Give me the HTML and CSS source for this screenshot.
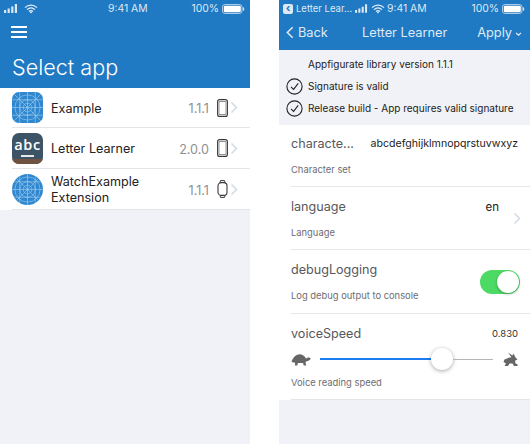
FILE: index.html
```html
<!DOCTYPE html>
<html lang="en">
<head>
    <meta charset="UTF-8">
    <meta name="viewport" content="width=device-width, initial-scale=1.0">
    <title>Appfigurate</title>
    <link rel="stylesheet" href="styles.css">
</head>
<body>
    <svg class="defs" width="0" height="0">
        <symbol id="blueprint" viewBox="0 0 32 32">
            <g fill="none" stroke="#a9d0ee" stroke-width="0.6">
                <path d="M0 8H32M0 16H32M0 24H32M8 0V32M16 0V32M24 0V32M0 0L32 32M32 0L0 32"/>
                <circle cx="16" cy="16" r="4.5"/>
                <circle cx="16" cy="16" r="8"/>
                <circle cx="16" cy="16" r="13"/>
            </g>
        </symbol>
        <symbol id="phone" viewBox="0 0 11 18">
            <rect x="0.6" y="0.6" width="9.8" height="16.8" rx="2" fill="none" stroke="#3a3a3c" stroke-width="1.1"/>
            <rect x="2" y="2.6" width="7" height="12.8" fill="none" stroke="#77777a" stroke-width="0.8"/>
        </symbol>
        <symbol id="chevron" viewBox="0 0 8 13">
            <path d="M1.5 1.5L6.5 6.5L1.5 11.5" fill="none" stroke="#d3dbe8" stroke-width="1.5"/>
        </symbol>
        <symbol id="check" viewBox="0 0 17 17">
            <circle cx="8.5" cy="8.5" r="7.6" fill="none" stroke="#222" stroke-width="1.1"/>
            <path d="M5 8.8L7.6 11.4L12.2 5.4" fill="none" stroke="#222" stroke-width="1.1"/>
        </symbol>
        <symbol id="status-signal" viewBox="0 0 14 9">
            <path d="M0 6h2.2v3H0zM3.6 4.5h2.2V9H3.6zM7.2 2.5h2.2V9H7.2zM10.8 0H13v9h-2.2z" fill="#dce9f5"/>
        </symbol>
        <symbol id="status-wifi" viewBox="0 0 14 10">
            <path d="M1 3.6C4.5 0.4 9.5 0.4 13 3.6M3 5.6C5.4 3.5 8.6 3.5 11 5.6M5 7.5C6.2 6.5 7.8 6.5 9 7.5" fill="none" stroke="#e6f0f8" stroke-width="1.2"/>
            <path d="M5.9 8.2L7 7.3L8.1 8.2L7 9.6Z" fill="#e6f0f8"/>
        </symbol>
        <symbol id="status-battery" viewBox="0 0 23 10">
            <rect x="0.5" y="0.5" width="19.5" height="9" rx="2.4" fill="none" stroke="#cfe0f0" stroke-width="0.8"/>
            <rect x="1.8" y="1.8" width="17" height="6.4" rx="1.2" fill="#fff"/>
            <rect x="20.8" y="3.3" width="1.4" height="3.4" rx="0.7" fill="#cfe0f0"/>
        </symbol>
    </svg>

    <div class="phone">
        <header class="app-bar tall">
            <div class="status">
                <span class="status-left">
                    <svg class="icon-signal"><use href="#status-signal"/></svg>
                    <svg class="icon-wifi"><use href="#status-wifi"/></svg>
                </span>
                <span class="status-time">9:41 AM</span>
                <span class="status-right">100%
                    <svg class="icon-battery"><use href="#status-battery"/></svg>
                </span>
            </div>
            <div class="menu"><span></span><span></span><span></span></div>
            <h1>Select app</h1>
        </header>

        <div class="app-list">
            <div class="app-row">
                <svg class="app-icon rounded"><use href="#blueprint"/></svg>
                <div class="app-name">Example</div>
                <div class="app-version">1.1.1</div>
                <svg class="device"><use href="#phone"/></svg>
                <svg class="chevron"><use href="#chevron"/></svg>
            </div>
            <div class="app-row">
                <div class="abc-icon"><span class="abc-text">abc</span><span class="abc-chalk"></span><span class="abc-wood"></span></div>
                <div class="app-name">Letter Learner</div>
                <div class="app-version">2.0.0</div>
                <svg class="device"><use href="#phone"/></svg>
                <svg class="chevron"><use href="#chevron"/></svg>
            </div>
            <div class="app-row">
                <svg class="app-icon circle"><use href="#blueprint"/></svg>
                <div class="app-name">WatchExample Extension</div>
                <div class="app-version">1.1.1</div>
                <svg class="device" viewBox="0 0 11 18">
                    <path d="M3 2.6L3.5 0.6H7.5L8 2.6M3 15.4L3.5 17.4H7.5L8 15.4" fill="none" stroke="#3a3a3c" stroke-width="1"/>
                    <rect x="1" y="2.6" width="9" height="12.8" rx="3.2" fill="none" stroke="#3a3a3c" stroke-width="1.1"/>
                </svg>
                <svg class="chevron"><use href="#chevron"/></svg>
            </div>
        </div>
    </div>

    <div class="phone">
        <header class="app-bar">
            <div class="status">
                <span class="status-left">
                    <span class="return-badge">&#8249;</span>
                    <span class="return-name">Letter Lear...</span>
                    <svg class="icon-signal"><use href="#status-signal"/></svg>
                    <svg class="icon-wifi"><use href="#status-wifi"/></svg>
                </span>
                <span class="status-time">9:41 AM</span>
                <span class="status-right">100%
                    <svg class="icon-battery"><use href="#status-battery"/></svg>
                </span>
            </div>
            <nav class="nav">
                <span class="nav-back">
                    <svg class="back-arrow" viewBox="0 0 9 14"><path d="M7.5 1L1.5 7L7.5 13" fill="none" stroke="#dfeaf5" stroke-width="1.7"/></svg>
                    Back
                </span>
                <span class="nav-title">Letter Learner</span>
                <span class="nav-apply">Apply
                    <svg class="apply-arrow" viewBox="0 0 7 4"><path d="M1 0.8L3.5 3.2L6 0.8" fill="none" stroke="#eef4fa" stroke-width="1.1"/></svg>
                </span>
            </nav>
        </header>

        <section class="info">
            <div class="info-row"><span class="check-space"></span>Appfigurate library version 1.1.1</div>
            <div class="info-row"><svg class="check"><use href="#check"/></svg>Signature is valid</div>
            <div class="info-row"><svg class="check"><use href="#check"/></svg>Release build - App requires valid signature</div>
        </section>

        <section class="settings">
            <div class="setting first">
                <div class="setting-top">
                    <span class="setting-name">characte...</span>
                    <span class="setting-value">abcdefghijklmnopqrstuvwxyz</span>
                </div>
                <div class="setting-desc">Character set</div>
            </div>
            <div class="setting language">
                <div class="setting-top">
                    <span class="setting-name">language</span>
                    <span class="setting-value lang-value">en</span>
                </div>
                <div class="setting-desc">Language</div>
                <svg class="chevron lang-chevron"><use href="#chevron"/></svg>
            </div>
            <div class="setting debug">
                <div class="setting-top">
                    <span class="setting-name">debugLogging</span>
                </div>
                <div class="setting-desc">Log debug output to console</div>
                <div class="toggle"><span class="toggle-knob"></span></div>
            </div>
            <div class="setting voice">
                <div class="setting-top">
                    <span class="setting-name">voiceSpeed</span>
                    <span class="setting-number">0.830</span>
                </div>
                <div class="slider-row">
                    <svg class="turtle" viewBox="0 0 20 13">
                        <path d="M0.5 9C2 4 5 1.2 9 1.2C12 1.2 14 3.4 15 5.8C16 4.5 18.5 4 19.7 5.2C19.4 7 17.5 8 15.5 8.2L14.5 9.2L15.2 12.5H12.8L12 10H7L6.2 12.5H3.8L4.2 9.8Z" fill="#666"/>
                    </svg>
                    <div class="slider">
                        <span class="slider-fill"></span>
                        <span class="slider-thumb"></span>
                        <span class="slider-rest"></span>
                    </div>
                    <svg class="rabbit" viewBox="0 0 15 15">
                        <path d="M5 0.5L9.5 3.5L10.5 1.5L12.5 5.5L14.5 7.5L12 8.8L12.5 11.5L14.5 12.2V14H11L9.5 11.5H6.5L5 14H1.5L3 11.5L0.5 10L1.5 7.5L6.5 5.5L8.5 5.2Z" fill="#666"/>
                    </svg>
                </div>
                <div class="setting-desc">Voice reading speed</div>
            </div>
        </section>
    </div>
</body>
</html>
```

FILE: styles.css
```css
body {
    font-family: Inter, "Liberation Sans", sans-serif;
    margin: 0;
    width: 530px;
    height: 444px;
    display: flex;
    gap: 29px;
    background-color: white;
    overflow: hidden;
}

.defs {
    display: none;
}

.phone {
    width: 250px;
    height: 444px;
    flex: none;
    background-color: #f1f2f7;
}

.phone + .phone {
    width: 251px;
}

.app-bar {
    background-color: #2079c3;
    color: white;
    height: 50px;
}

.app-bar.tall {
    height: 88px;
}

.status {
    height: 17px;
    padding: 0 5px 0 4px;
    display: flex;
    align-items: center;
    font-size: 10.4px;
    color: #dce9f5;
}

.status-left {
    display: flex;
    align-items: center;
    width: 104px;
    flex: none;
}

.status-right {
    display: flex;
    align-items: center;
    justify-content: flex-end;
    flex: 1;
    gap: 3px;
}

.icon-signal {
    width: 14px;
    height: 9px;
}

.icon-wifi {
    width: 14px;
    height: 10px;
    margin-left: 6px;
}

.icon-battery {
    width: 23px;
    height: 10px;
}

.menu {
    margin: 9px 0 0 11px;
    width: 16px;
    display: flex;
    flex-direction: column;
    gap: 3px;
}

.menu span {
    height: 2px;
    background-color: white;
}

h1 {
    margin: 15px 0 0 12px;
    font-size: 21.6px;
    line-height: 28px;
    font-weight: 300;
}

.app-list {
    background-color: white;
}

.app-row {
    height: 40px;
    margin-left: 12px;
    padding-right: 12px;
    display: flex;
    align-items: center;
    border-bottom: 1px solid #e3e4e8;
}

.app-row:first-child {
    height: 39px;
}

.app-icon {
    width: 31px;
    height: 31px;
    background-color: #2f87d0;
    flex: none;
}

.rounded {
    border-radius: 7px;
}

.circle {
    border-radius: 50%;
}

.abc-icon {
    width: 31px;
    height: 31px;
    flex: none;
    border-radius: 7px;
    overflow: hidden;
    background-color: #3d5466;
    display: flex;
    flex-direction: column;
    align-items: center;
    color: white;
}

.abc-text {
    font-size: 14.5px;
    line-height: 14px;
    font-weight: 600;
    letter-spacing: 0.6px;
    margin-top: 5px;
    font-family: "Open Sans", sans-serif;
}

.abc-chalk {
    width: 13px;
    height: 2px;
    background-color: #e8e8e8;
    margin-top: 3px;
}

.abc-wood {
    width: 100%;
    height: 5px;
    background-color: #6f5240;
    margin-top: auto;
}

.app-name {
    margin-left: 8px;
    flex: 1;
    width: 100px;
    padding: 2px 30px 0 0;
    font-size: 12.6px;
    line-height: 16px;
    color: #222;
}

.app-version {
    padding-top: 2px;
    font-size: 12.6px;
    color: #8e8e93;
    margin-right: 8px;
}

.device {
    width: 11px;
    height: 18px;
    flex: none;
}

.chevron {
    width: 8px;
    height: 13px;
    flex: none;
    margin-left: 2px;
}

.return-badge {
    width: 10px;
    height: 10px;
    border-radius: 2px;
    background-color: #dce9f5;
    color: #2079c3;
    font-size: 11px;
    line-height: 9px;
    font-weight: 700;
    text-align: center;
    flex: none;
}

.return-name {
    margin: 0 3px;
    font-size: 9.5px;
    white-space: nowrap;
}

.phone + .phone .status-left .icon-signal {
    width: 13px;
}

.phone + .phone .status-left .icon-wifi {
    margin-left: 3px;
}

.nav {
    height: 33px;
    padding: 0 8px 3px 7px;
    box-sizing: border-box;
    display: flex;
    align-items: center;
    font-size: 12.8px;
    color: #dfeaf5;
}

.nav-back {
    display: flex;
    align-items: center;
    gap: 4px;
    width: 68px;
}

.back-arrow {
    width: 8px;
    height: 13px;
}

.nav-title {
    flex: 1;
    padding-left: 8px;
    white-space: nowrap;
}

.nav-apply {
    display: flex;
    align-items: center;
    gap: 3px;
}

.apply-arrow {
    width: 7px;
    height: 4px;
    margin-top: 4px;
}

.info {
    height: 75px;
    padding-top: 3px;
    box-sizing: border-box;
}

.info-row {
    height: 22px;
    display: flex;
    align-items: center;
    padding-left: 7px;
    font-size: 10px;
    color: #222;
}

.check,
.check-space {
    width: 17px;
    height: 17px;
    flex: none;
    margin-right: 5px;
}

.settings {
    background-color: white;
    height: 275px;
    box-sizing: border-box;
}

.setting {
    margin-left: 12px;
    padding-right: 12px;
    border-bottom: 1px solid #e6e7eb;
    box-sizing: border-box;
    height: 63px;
    position: relative;
}

.setting.first {
    height: 62px;
}

.setting.debug {
    height: 64px;
}

.setting.voice {
    height: 86px;
    border-bottom-color: #e3e4e8;
}

.setting-top {
    padding-top: 11px;
    display: flex;
    justify-content: space-between;
    align-items: center;
    line-height: 18px;
}

.first .setting-top {
    padding-top: 10px;
}

.setting-name {
    font-size: 12.6px;
    color: #58585c;
}

.setting-value {
    font-size: 10.6px;
    color: #222;
}

.lang-value {
    font-size: 11.5px;
    margin-right: 19px;
}

.setting-number {
    font-size: 9.5px;
    color: #333;
}

.setting-desc {
    margin-top: 10px;
    font-size: 9.4px;
    line-height: 14px;
    color: #6d6d72;
}

/* chevron and toggle sit over the row, centred on it */
.lang-chevron {
    position: absolute;
    right: 9px;
    top: 25px;
}

.toggle {
    position: absolute;
    right: 10px;
    top: 20px;
    width: 40px;
    height: 24px;
    border-radius: 12px;
    background-color: #4cd964;
    display: flex;
    justify-content: flex-end;
    align-items: center;
    padding-right: 1px;
    box-sizing: border-box;
}

.toggle-knob {
    width: 22px;
    height: 22px;
    border-radius: 50%;
    background-color: white;
    box-shadow: 0 1px 3px rgba(0, 0, 0, 0.3);
}

.slider-row {
    display: flex;
    align-items: center;
    height: 24px;
    margin-top: 4px;
}

.turtle {
    width: 20px;
    height: 13px;
    flex: none;
}

.rabbit {
    width: 15px;
    height: 15px;
    flex: none;
    margin-left: 10px;
}

.slider {
    flex: 1;
    margin-left: 9px;
    display: flex;
    align-items: center;
    height: 24px;
}

.slider-fill {
    width: 111px;
    height: 1.5px;
    background-color: #1a7cf0;
}

.slider-thumb {
    width: 22px;
    height: 22px;
    flex: none;
    border-radius: 50%;
    background-color: white;
    box-shadow: 0 1px 4px rgba(0, 0, 0, 0.35);
}

.slider-rest {
    flex: 1;
    height: 1px;
    background-color: #b5b5b8;
}

.voice .setting-desc {
    margin-top: 5px;
}
```
